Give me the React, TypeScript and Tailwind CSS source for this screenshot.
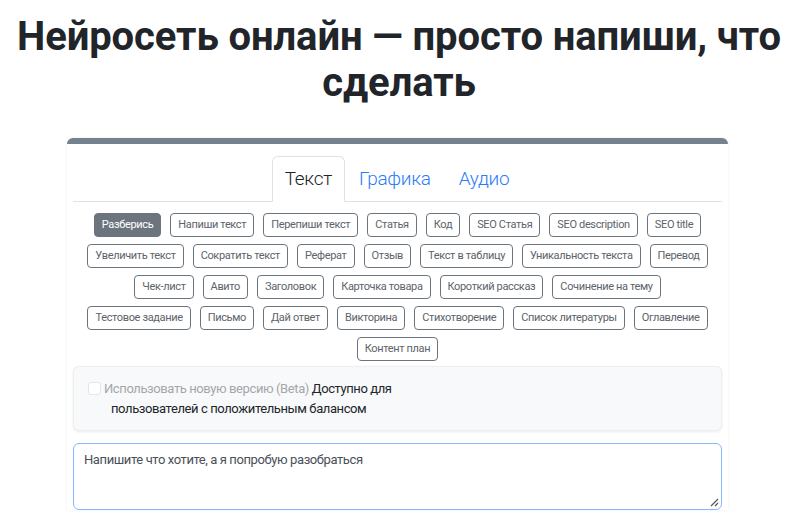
import React from "react";

const rows: string[] = [
  "Разберись",
  "Напиши текст",
  "Перепиши текст",
  "Статья",
  "Код",
  "SEO Статья",
  "SEO description",
  "SEO title",
  "Увеличить текст",
  "Сократить текст",
  "Реферат",
  "Отзыв",
  "Текст в таблицу",
  "Уникальность текста",
  "Перевод",
  "Чек-лист",
  "Авито",
  "Заголовок",
  "Карточка товара",
  "Короткий рассказ",
  "Сочинение на тему",
  "Тестовое задание",
  "Письмо",
  "Дай ответ",
  "Викторина",
  "Стихотворение",
  "Список литературы",
  "Оглавление",
  "Контент план",
];

export default function App() {
  return (
    <div className="min-h-screen bg-white font-['Roboto',sans-serif] text-[#212529]">
      <h1 className="px-3 pt-[14px] text-center text-[40px] font-bold leading-[46px] tracking-[-0.1px] text-[#212529]">
        Нейросеть онлайн — просто напиши, что сделать
      </h1>
      <div className="ml-[67px] mt-[32px] w-[661px] rounded-t-[6px] border-t-[6px] border-[#748290] bg-white px-[6px] pt-[12px] shadow-[0_0_3px_rgba(0,0,0,0.08)]">
        <ul className="flex justify-center border-b border-[#dee2e6]">
          <li className="-mb-px rounded-t-[6px] border border-[#dee2e6] border-b-white bg-white px-[12px] py-[7px] text-[19px] font-light leading-[29px] tracking-[-0.3px] text-[#212529]">
            Текст
          </li>
          <li className="border border-transparent px-[13px] py-[7px] text-[19px] font-light leading-[29px] tracking-[-0.3px] text-[#2b7cf8]">
            Графика
          </li>
          <li className="border border-transparent px-[13px] py-[7px] text-[19px] font-light leading-[29px] tracking-[-0.3px] text-[#2b7cf8]">
            Аудио
          </li>
        </ul>
        <div className="mt-[11px] flex flex-wrap justify-center gap-x-[9px] gap-y-[7px] px-[8px]">
          {rows.map((t, i) => (
            <span
              key={t}
              className={
                i === 0
                  ? "rounded-[4px] border border-[#6c757d] bg-[#6c757d] px-[7px] text-[11px] leading-[22px] tracking-[-0.35px] text-white"
                  : "rounded-[4px] border border-[#6c757d] bg-white px-[7px] text-[11px] leading-[22px] tracking-[-0.35px] text-[#5c636a]"
              }
            >
              {t}
            </span>
          ))}
        </div>
        <div className="mt-[5px] rounded-[6px] border border-[#eceef0] bg-[#f8f9fa] px-[14px] pb-[11px] pt-[12px] shadow-[0_1px_3px_rgba(0,0,0,0.08)]">
          <div className="pl-[23px] -indent-[23px] text-[13px] leading-[20px] tracking-[-0.4px]">
            <span className="mr-[3px] inline-block h-[13px] w-[13px] rounded-[3px] border border-[#e3e5e8] bg-white align-[-2px]" />
            <span className="text-[#a3a7ab]">Использовать новую версию (Beta)</span>{" "}
            <span className="text-[#212529]">
              Доступно для
              <br />
              пользователей с положительным балансом
            </span>
          </div>
        </div>
        <div className="relative mt-[12px] h-[67px] rounded-[6px] border border-[#86b7fe] bg-white px-[10px] pt-[6px] text-[13px] leading-[20px] tracking-[-0.4px] text-[#495057]">
          Напишите что хотите, а я попробую разобраться
          <svg className="absolute bottom-[2px] right-[2px]" width="10" height="10" viewBox="0 0 10 10">
            <path d="M9 2 L2 9 M9 6 L6 9" stroke="#555" strokeWidth="1.2" />
          </svg>
        </div>
      </div>
    </div>
  );
}
